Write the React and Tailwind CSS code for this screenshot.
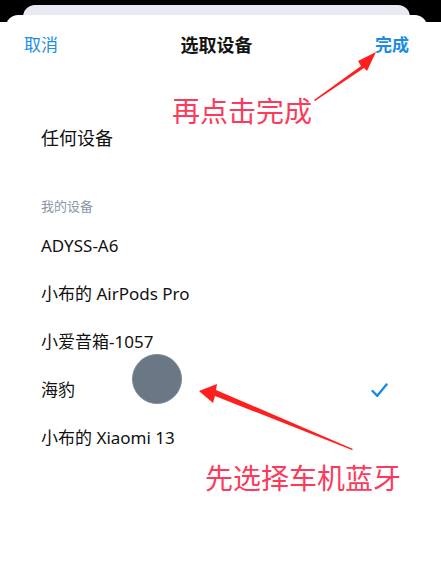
import React from "react";

const devices = [
  { name: "ADYSS-A6" },
  { name: "小布的 AirPods Pro" },
  { name: "小爱音箱-1057" },
  { name: "海豹", selected: true },
  { name: "小布的 Xiaomi 13" },
];

const font = { fontFamily: '"Noto Sans", "Noto Sans CJK SC", sans-serif' };

export default function App() {
  return (
    <div
      className="relative w-[441px] h-[562px] overflow-hidden bg-[linear-gradient(to_bottom,#000_22px,#fff_22px)] text-[#111]"
      style={font}
    >
      {/* stacked sheet behind */}
      <div className="ml-[23px] mr-[31px] mt-[5px] h-[14px] rounded-t-[12px] bg-[#e7eaf2]" />

      {/* main sheet */}
      <div className="ml-[6px] mr-[14px] -mt-[4px] rounded-t-[12px] bg-white">
        <div className="h-[60px] flex items-center justify-between px-[18px]">
          <button className="text-[17px] text-[#1c8ce3]">取消</button>
          <div className="text-[18px] font-semibold text-[#141414]">选取设备</div>
          <button className="text-[17px] font-semibold text-[#1c8ce3]">完成</button>
        </div>

        <div className="mt-[39px] h-[48px] flex items-center px-[35px] text-[18px]">任何设备</div>

        <div className="pt-[35px] pb-[7px] px-[35px] text-[13px] leading-[18px] text-[#8c95a8]">我的设备</div>

        <div className="flex flex-col">
          {devices.map((d) => (
            <div key={d.name} className="h-[48px] flex items-center justify-between pl-[35px] pr-[39px] text-[17px]">
              <span>{d.name}</span>
              {d.selected && (
                <svg width="17" height="15" viewBox="0 0 17 15" fill="none">
                  <path d="M1.5 8 L6.3 12.8 L15.5 1.5" stroke="#1c8ce3" strokeWidth="2.4" strokeLinecap="round" strokeLinejoin="round" />
                </svg>
              )}
            </div>
          ))}
        </div>
      </div>

      {/* touch indicator */}
      <div className="absolute left-[132px] top-[354px] w-[50px] h-[50px] rounded-full bg-[#6a7885] border border-[#7d8b97]" />

      {/* annotations */}
      <div className="absolute left-[172px] top-[92px] text-[28px] leading-[38px] text-[#fb3a5c]">再点击完成</div>
      <div className="absolute left-[205px] top-[459px] text-[28px] leading-[38px] text-[#fb3a5c]">先选择车机蓝牙</div>

      <svg className="absolute inset-0 pointer-events-none" width="441" height="562" viewBox="0 0 441 562">
        <polygon points="314,100 361,66 358,61 376,52 367,71 364,68 315,101" fill="#ff1f1f" />
        <polygon points="352,450 215,396 213,403 199,391 217,384 216,390 353,449" fill="#ff1f1f" />
      </svg>
    </div>
  );
}
